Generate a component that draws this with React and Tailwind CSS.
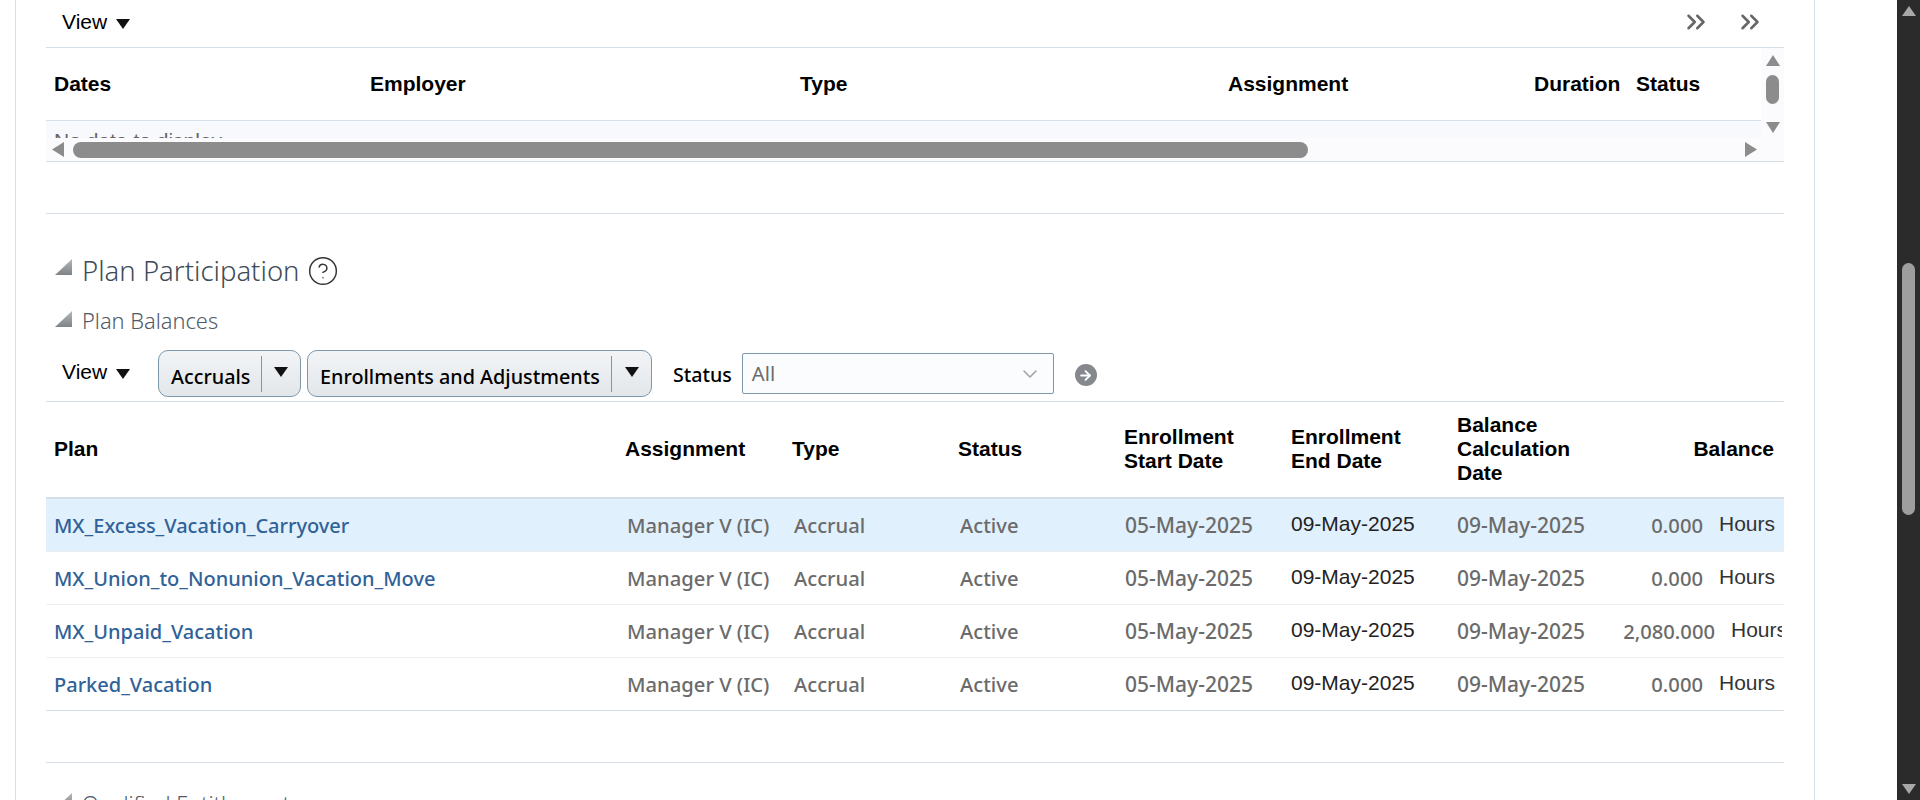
import { ChevronsRight, ChevronDown, ArrowRight, CircleHelp } from 'lucide-react'

const rows = [
  { plan: 'MX_Excess_Vacation_Carryover', balance: '0.000', numWidth: 'w-[86px]', selected: true },
  { plan: 'MX_Union_to_Nonunion_Vacation_Move', balance: '0.000', numWidth: 'w-[86px]' },
  { plan: 'MX_Unpaid_Vacation', balance: '2,080.000', numWidth: 'w-[98px]' },
  { plan: 'Parked_Vacation', balance: '0.000', numWidth: 'w-[86px]' },
]

const segoe = "font-['Noto_Sans',sans-serif]"
const arial = "font-['Liberation_Sans',sans-serif]"

function Caret({ className }) {
  return (
    <svg className={className} width="14" height="10" viewBox="0 0 14 10">
      <polygon points="0,0 14,0 7,10" fill="#111" />
    </svg>
  )
}

function Disclosure({ className }) {
  return (
    <svg className={`shrink-0 ${className}`} width="17" height="16" viewBox="0 0 17 16">
      <defs>
        <linearGradient id="disclosureFill" x1="0" y1="0" x2="0" y2="1">
          <stop offset="0" stopColor="#b4b8bb" />
          <stop offset="1" stopColor="#7d8387" />
        </linearGradient>
      </defs>
      <polygon points="17,0 17,16 0,16" fill="url(#disclosureFill)" />
    </svg>
  )
}

function SplitButton({ label, width, textWidth }) {
  return (
    <div className={`flex items-center h-[47px] ${width} rounded-[10px] border border-[#7d97ab] bg-gradient-to-b from-[#f2f4f6] to-[#e3e7ea]`}>
      <span className={`${textWidth} pl-3 pt-[6px] text-[19.8px] font-medium text-black whitespace-nowrap ${segoe}`}>{label}</span>
      <div className="w-px h-9 bg-[#7d97ab]" />
      <div className="flex-1 flex justify-center pb-1">
        <Caret />
      </div>
    </div>
  )
}

function ScrollArrow({ dir }) {
  const points = {
    up: '7,0 14,11 0,11',
    down: '0,0 14,0 7,11',
    left: '12,0 12,15 0,7.5',
    right: '0,0 12,7.5 0,15',
  }[dir]
  const horizontal = dir === 'left' || dir === 'right'
  return (
    <svg width={horizontal ? 12 : 14} height={horizontal ? 15 : 11} viewBox={horizontal ? '0 0 12 15' : '0 0 14 11'}>
      <polygon points={points} fill="#8c8c8c" />
    </svg>
  )
}

export default function App() {
  return (
    <div className="flex h-[800px] overflow-hidden bg-white">
      <div className="flex-1 pl-[15px] pr-[82px]">
        <div className="h-[800px] border-x border-[#d6dfe8] pl-[30px] pr-[30px] overflow-hidden">
          {/* Work history table */}
          <div className="flex items-center h-[48px] border-b border-[#d6dfe8] pb-[3px]">
            <span className={`ml-[16px] text-[21px] text-black ${arial}`}>View</span>
            <Caret className="ml-[9px] mt-[3px]" />
            <div className="ml-auto flex gap-[24px] mr-[19px] text-[#666]">
              <ChevronsRight size={30} strokeWidth={2} />
              <ChevronsRight size={30} strokeWidth={2} />
            </div>
          </div>
          <div className="relative h-[114px] border-b border-[#d6dfe8] bg-[#fbfbfd] overflow-hidden">
            <div className="mr-[23px] bg-white h-[73px] border-b border-[#d6dfe8]">
              <div className={`flex items-center h-full font-bold text-[21px] text-black ${arial}`}>
                <span className="ml-[8px] w-[316px]">Dates</span>
                <span className="w-[430px]">Employer</span>
                <span className="w-[428px]">Type</span>
                <span className="w-[306px]">Assignment</span>
                <span className="w-[102px]">Duration</span>
                <span>Status</span>
              </div>
            </div>
            <div className={`mr-[23px] h-[17px] bg-[#f7f9fc] overflow-hidden pl-[8px] text-[21px] leading-[39px] text-[#666] ${arial}`}>
              No data to display
            </div>
            <div className="flex items-center h-[23px] pl-[6px] pr-[27px]">
              <ScrollArrow dir="left" />
              <div className="ml-[9px] w-[1235px] h-[16px] rounded-full bg-[#8c8c8c]" />
              <div className="ml-auto">
                <ScrollArrow dir="right" />
              </div>
            </div>
            <div className="absolute top-0 right-0 w-[23px] h-[90px] flex flex-col items-center bg-[#fbfbfd] pt-[7px]">
              <ScrollArrow dir="up" />
              <div className="mt-[9px] w-[13px] h-[29px] rounded-full bg-[#8c8c8c]" />
              <div className="mt-[18px]">
                <ScrollArrow dir="down" />
              </div>
            </div>
          </div>
          <div className="h-[52px] border-b border-[#d6dfe8]" />

          {/* Plan participation */}
          <div className="mt-[40px] h-[34px] flex items-center">
            <Disclosure className="ml-[9px] mb-[9px]" />
            <h2 className={`ml-[10px] text-[27.5px] font-light text-[#3d4b57] ${segoe}`}>Plan Participation</h2>
            <CircleHelp className="ml-[7px] text-[#333]" size={32} strokeWidth={1.1} />
          </div>
          <div className="mt-[16px] h-[34px] flex items-center">
            <Disclosure className="ml-[9px] mb-[5px]" />
            <h3 className={`ml-[10px] text-[21.8px] font-light text-[#4f5b66] ${segoe}`}>Plan Balances</h3>
          </div>
          <div className="flex h-[64px] pt-[12px] border-b border-[#d6dfe8]">
            <div className="ml-[16px] w-[96px] h-[44px] flex items-center">
              <span className={`text-[21px] text-black ${arial}`}>View</span>
              <Caret className="ml-[9px] mt-[3px]" />
            </div>
            <SplitButton label="Accruals" width="w-[143px]" textWidth="w-[102px]" />
            <div className="w-[6px]" />
            <SplitButton label="Enrollments and Adjustments" width="w-[345px]" textWidth="w-[303px]" />
            <span className={`ml-[21px] mt-[13px] text-[19.6px] font-medium leading-[24px] text-black ${segoe}`}>Status</span>
            <div className="ml-[10px] mt-[3px] w-[312px] h-[41px] flex items-center justify-between pl-[9px] pr-[11px] border border-[#7d97ab] rounded-[2px] bg-[#fbfcfe]">
              <span className={`text-[20.2px] text-[#6b6b6b] ${segoe}`}>All</span>
              <ChevronDown className="text-[#a0a0a0]" size={24} strokeWidth={1.5} />
            </div>
            <div className="ml-[21px] mt-[14px] w-[22px] h-[22px] rounded-full bg-[#85898d] flex items-center justify-center">
              <ArrowRight className="text-white" size={15} strokeWidth={3} />
            </div>
          </div>

          <table className="table-fixed w-[1738px] border-separate border-spacing-0">
            <colgroup>
              <col className="w-[571px]" />
              <col className="w-[167px]" />
              <col className="w-[166px]" />
              <col className="w-[166px]" />
              <col className="w-[167px]" />
              <col className="w-[166px]" />
              <col className="w-[168px]" />
              <col className="w-[167px]" />
            </colgroup>
            <thead>
              <tr className={`h-[97px] text-left text-[21px] leading-[24px] font-bold text-black ${arial}`}>
                <th className="pl-[8px] pb-[2px] border-b-2 border-[#d6dfe8] font-bold">Plan</th>
                <th className="pl-[8px] pb-[2px] border-b-2 border-[#d6dfe8] font-bold">Assignment</th>
                <th className="pl-[8px] pb-[2px] border-b-2 border-[#d6dfe8] font-bold">Type</th>
                <th className="pl-[8px] pb-[2px] border-b-2 border-[#d6dfe8] font-bold">Status</th>
                <th className="pl-[8px] pb-[2px] border-b-2 border-[#d6dfe8] font-bold">Enrollment<br />Start Date</th>
                <th className="pl-[8px] pb-[2px] border-b-2 border-[#d6dfe8] font-bold">Enrollment<br />End Date</th>
                <th className="pl-[8px] pb-[2px] border-b-2 border-[#d6dfe8] font-bold">Balance<br />Calculation<br />Date</th>
                <th className="pr-[10px] pb-[2px] text-right border-b-2 border-[#d6dfe8] font-bold">Balance</th>
              </tr>
            </thead>
            <tbody>
              {rows.map((row, i) => {
                const cell = `h-[53px] border-b ${i === rows.length - 1 ? 'border-[#d6dfe8]' : 'border-[#edf0f3]'} ${row.selected ? 'bg-[#e1f0fd]' : ''}`
                const gray = `${cell} pt-[1px] text-[20.2px] font-medium text-[#6b6b6b] whitespace-nowrap ${segoe}`
                const grayDate = `${cell} pt-[1px] text-[21px] font-medium text-[#6b6b6b] whitespace-nowrap ${segoe}`
                return (
                  <tr key={row.plan}>
                    <td className={`${cell} pl-[8px] pt-[1px] text-[20px] font-medium text-[#2f6298] whitespace-nowrap ${segoe}`}>{row.plan}</td>
                    <td className={`${gray} pl-[10px]`}>Manager V (IC)</td>
                    <td className={`${gray} pl-[10px]`}>Accrual</td>
                    <td className={`${gray} pl-[10px]`}>Active</td>
                    <td className={`${grayDate} pl-[9px]`}>05-May-2025</td>
                    <td className={`${cell} pl-[8px] pb-[2px] text-[21px] text-[#222] whitespace-nowrap ${arial}`}>09-May-2025</td>
                    <td className={`${grayDate} pl-[8px]`}>09-May-2025</td>
                    <td className={cell}>
                      <div className="flex items-center overflow-hidden w-[165px]">
                        <span className={`${row.numWidth} shrink-0 pt-[1px] text-right text-[20.2px] font-medium text-[#6b6b6b] ${segoe}`}>{row.balance}</span>
                        <span className={`ml-[16px] shrink-0 pb-[3px] text-[21px] text-[#333] ${arial}`}>Hours</span>
                      </div>
                    </td>
                  </tr>
                )
              })}
            </tbody>
          </table>

          <div className="h-[52px] border-b border-[#d6dfe8]" />
          <div className="mt-[24px] h-[34px] flex items-center">
            <Disclosure className="ml-[9px] mb-[7px]" />
            <h3 className={`ml-[10px] text-[21.8px] font-light text-[#4f5b66] ${segoe}`}>Qualified Entitlements</h3>
          </div>
        </div>
      </div>

      {/* Browser scrollbar */}
      <div className="w-[23px] h-[800px] shrink-0 bg-[#2b2b2b] flex flex-col items-center">
        <svg className="mt-[6px]" width="14" height="10" viewBox="0 0 14 10">
          <polygon points="7,0 14,10 0,10" fill="#a8a8a8" />
        </svg>
        <div className="mt-[247px] w-[13px] h-[252px] rounded-full bg-[#9e9e9e]" />
        <svg className="mt-auto mb-[6px]" width="14" height="10" viewBox="0 0 14 10">
          <polygon points="0,0 14,0 7,10" fill="#a8a8a8" />
        </svg>
      </div>
    </div>
  )
}
